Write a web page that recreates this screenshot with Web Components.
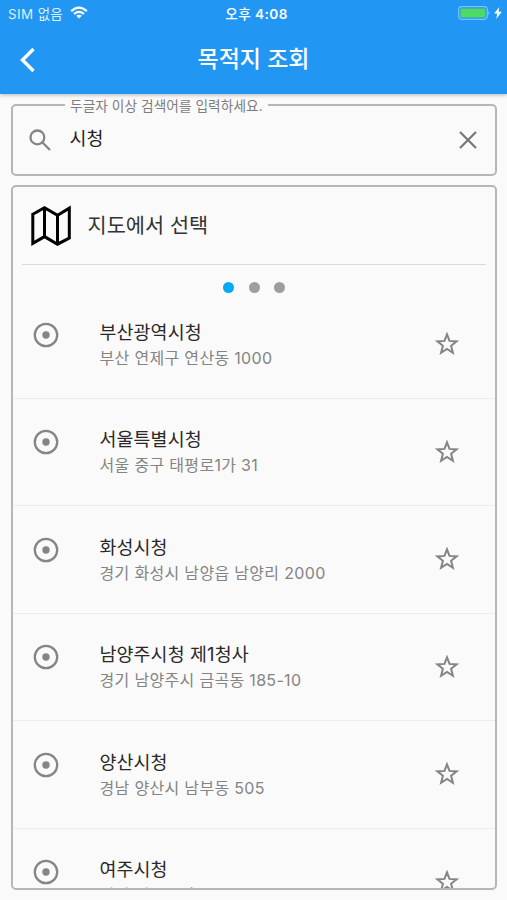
<!DOCTYPE html>
<html lang="ko">
<head>
<meta charset="utf-8">
<title>목적지 조회</title>
<style>
html,body{margin:0;height:900px;overflow:hidden;background:#fafafa}
body{font-family:Inter,"Noto Sans CJK KR",sans-serif;color:#333}
</style>
</head>
<body>
<search-screen></search-screen>
<script>
function define(name, css, html){
  customElements.define(name, class extends HTMLElement{
    connectedCallback(){
      if(this.shadowRoot) return;
      const root=this.attachShadow({mode:'open'});
      root.innerHTML='<style>*{box-sizing:border-box}svg{display:block;flex:none}'+css+'</style>'+html;
    }
  });
}

define('status-bar', `
:host{display:grid;grid-template-columns:1fr auto 1fr;align-items:center;height:27px;padding:0 5px 0 8px;color:#fff;font-size:13.4px;line-height:20px;white-space:nowrap}
.l,.r{display:flex;align-items:center}
.l{gap:7px;color:#dff0ff}.l span{letter-spacing:.4px}.l svg{margin-top:-2px}.r{justify-content:flex-end;gap:4px;margin-top:-1px}
.t{font-weight:600;font-size:13.6px;letter-spacing:.45px;padding-left:3px}.t b{font-weight:500}`,
`<div class="l"><span>SIM 없음</span>
<svg width="18" height="13" viewBox="0 0 18 13" fill="none" stroke="#fff" stroke-width="2.3"><path d="M1.2 5.2Q9-2 16.8 5.2M4 8Q9 3.7 14 8"/><path d="M9 12.6L6.2 9.8Q9 7.5 11.8 9.8Z" fill="#fff" stroke="none"/></svg></div>
<span class="t"><b>오후</b> 4:08</span>
<div class="r"><svg width="32" height="14" viewBox="0 0 32 14"><rect x=".7" y=".7" width="28.6" height="12.6" rx="3.2" fill="none" stroke="#82c2fa" stroke-width="1.2"/><rect x="2.5" y="2.5" width="25" height="9" rx="1.2" fill="#4cd964"/><path d="M30.3 4.7Q32.6 7 30.3 9.3Z" fill="#82c2fa"/></svg>
<svg width="8" height="12" viewBox="0 0 8 12"><path d="M5.2 0L.2 6.6H3.3L2.2 12L7.8 4.8H4.6Z" fill="#fff"/></svg></div>`);

define('app-bar', `
:host{display:block;position:relative;z-index:1;height:94px;background:#2196f3;box-shadow:0 1px 4px rgba(0,0,0,.28)}
.nav{display:grid;grid-template-columns:50px 1fr 50px;align-items:center;height:65px}
svg{margin-left:20px}
h1{margin:-2px 0 0;text-align:center;color:#fff;font-size:23px;line-height:30px;font-weight:500}`,
`<status-bar></status-bar><div class="nav"><svg width="16" height="26" viewBox="0 0 16 26" fill="none" stroke="#fff" stroke-width="3.4"><path d="M13.5 2L2.5 13L13.5 24"/></svg><h1><slot></slot></h1></div>`);

define('search-field', `
:host{display:block;height:82px;padding:2px 10px 0 11px}
fieldset{margin:0;border:2px solid #b6b6b6;border-radius:5px;height:80px;padding:0;min-width:0}
legend{margin-left:52px;padding:0 5px;font-size:13.7px;line-height:20px;height:18px;color:#7d7d7d;white-space:nowrap;letter-spacing:.05px}
.row{display:flex;align-items:center;height:51px;padding:0 16px 0 15px}
.q{flex:1;margin:-3px 0 0 17.5px;font-size:18.4px;line-height:28px;color:#222}`,
`<fieldset><legend>두글자 이상 검색어를 입력하세요.</legend><div class="row">
<svg width="24" height="24" viewBox="0 0 24 24" fill="none" stroke="#858585" stroke-width="2.3"><circle cx="9.4" cy="9.4" r="6.9"/><path d="M14.5 14.5L22 22"/></svg>
<span class="q"><slot></slot></span>
<svg width="22" height="22" viewBox="0 0 22 22" stroke="#777" stroke-width="2.2"><path d="M3 3L19 19M19 3L3 19"/></svg></div></fieldset>`);

define('map-picker', `
:host{display:flex;align-items:center;height:78px;margin:0 9px;padding-left:8px;border-bottom:1px solid #d9d9d9;font-size:20.8px;line-height:30px}
svg{margin-right:15.5px}`,
`<svg width="42" height="42" viewBox="0 0 42 42" fill="none" stroke="#000" stroke-width="3"><path d="M2.8 9.2L14.5 2.8L27.5 10.2L39.3 3.2V33L27.5 39.2L14.5 31.6L2.8 38.4ZM14.5 2.8V31.6M27.5 10.2V39.2"/></svg><slot></slot>`);

define('page-dots', `
:host{display:flex;justify-content:center;align-items:flex-start;gap:14.7px;height:26px;padding-top:17px}
i{flex:none;width:11px;height:11px;border-radius:50%;background:#9e9e9e}i.on{background:#03a9f4}`,
`<i class="on"></i><i></i><i></i>`);

define('place-item', `
:host{display:grid;grid-template-columns:86.5px 1fr 50px;height:107.5px;border-bottom:1px solid #ececec;padding-right:11px}
.pin{margin:30.5px 0 0 20px}
.star{margin:41px 0 0 1px}
.t{padding-top:27.5px}
.n{font-size:18.4px;line-height:26px;color:#292929;letter-spacing:.12px}
.a{font-size:16px;line-height:26px;color:#848484;letter-spacing:.32px}`,
`<svg class="pin" width="26" height="26" viewBox="0 0 26 26"><circle cx="13" cy="13" r="11.2" fill="none" stroke="#858585" stroke-width="2.3"/><circle cx="13" cy="13" r="3.7" fill="#858585"/></svg>
<div class="t"><div class="n"><slot name="name"></slot></div><div class="a"><slot name="address"></slot></div></div>
<svg class="star" width="24" height="24" viewBox="0 0 24 24" fill="none" stroke="#858585" stroke-width="2"><path d="M12 2.3L14.5 8.9L21.6 9.4L16.1 13.8L17.9 20.8L12 16.9L6.1 20.8L7.9 13.8L2.4 9.4L9.5 8.9Z"/></svg>`);

define('result-panel', `
:host{display:block;margin:9px 10px 0 11px;height:705px;border:2px solid #b6b6b6;border-radius:5px;overflow:hidden}`,
`<slot></slot>`);

const places=[
 ['부산광역시청','부산 연제구 연산동 1000'],
 ['서울특별시청','서울 중구 태평로1가 31'],
 ['화성시청','경기 화성시 남양읍 남양리 2000'],
 ['남양주시청 제1청사','경기 남양주시 금곡동 185-10'],
 ['양산시청','경남 양산시 남부동 505'],
 ['여주시청','경기 여주시 홍문동']
];
define('search-screen', `
:host{display:flex;flex-direction:column;width:507px;height:900px;overflow:hidden;background:#fafafa}
app-bar,search-field,result-panel{flex:none}`,
`<app-bar>목적지 조회</app-bar><search-field>시청</search-field>
<result-panel><map-picker>지도에서 선택</map-picker><page-dots></page-dots>`+
places.map(([n,a])=>`<place-item><span slot="name">${n}</span><span slot="address">${a}</span></place-item>`).join('')+
`</result-panel>`);
</script>
</body>
</html>
